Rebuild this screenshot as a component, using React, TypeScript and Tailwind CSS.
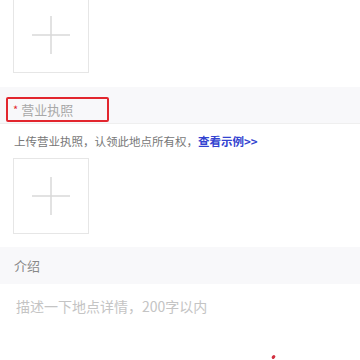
import React from 'react'

const font = { fontFamily: '"Noto Sans CJK SC", "Noto Sans", sans-serif' }

function UploadBox({ className = '' }: { className?: string }) {
    return (
        <div className={`w-[76px] h-[76px] border border-[#e6e6e6] flex items-center justify-center ${className}`}>
            <svg width="38" height="38" viewBox="0 0 38 38">
                <line x1="0" y1="19" x2="38" y2="19" stroke="#d9d9d9" strokeWidth="1.5" />
                <line x1="19" y1="0" x2="19" y2="38" stroke="#d9d9d9" strokeWidth="1.5" />
            </svg>
        </div>
    )
}

export default function App() {
    return (
        <div className="relative w-[360px] h-[360px] overflow-hidden bg-white" style={font}>
            {/* top upload box, cut off by viewport */}
            <div className="pl-[13px] -mt-[3px]">
                <UploadBox />
            </div>

            {/* section header */}
            <div className="mt-[14px] h-[37px] bg-[#f8f8fa] border-b border-[#efefef] flex items-end pl-[6px] pb-[1px]">
                <div className="w-[103px] h-[25px] border-2 border-[#e2262e] rounded-[2px] flex items-center pl-[5px] text-[13px] text-[#a8a8a8]">
                    <span className="text-[#e2262e] text-[11px] mr-[3px]">*</span>
                    营业执照
                </div>
            </div>

            <div className="pl-[14px] pt-[9px] text-[11.5px] leading-[16px] text-[#777]">
                上传营业执照，认领此地点所有权，
                <span className="text-[#3343d0] font-bold">查看示例&gt;&gt;</span>
            </div>

            <div className="pl-[13px] pt-[9px]">
                <UploadBox />
            </div>

            {/* intro section */}
            <div className="mt-[13px] h-[37px] bg-[#f8f8fa] flex items-center pl-[14px] text-[13px] text-[#888]">
                介绍
            </div>
            <div className="pl-[16px] pt-[12px] text-[14px] leading-[20px] text-[#c4c4c4]">
                描述一下地点详情，200字以内
            </div>

            {/* stray cursor mark */}
            <div className="absolute left-[272px] top-[355px] w-[3px] h-[4px] bg-[#d23040] rotate-45 rounded-sm" />
        </div>
    )
}
